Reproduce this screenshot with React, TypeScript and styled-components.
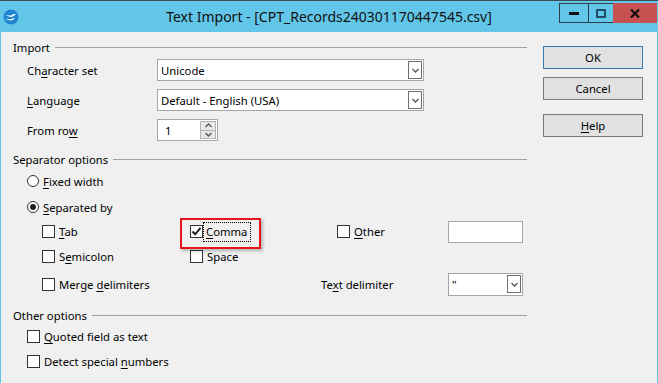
import React from "react";
import styled, { createGlobalStyle } from "styled-components";

const GlobalStyle = createGlobalStyle`
  html, body {
    margin: 0;
    padding: 0;
    background: #f0f0f0;
  }
  body {
    font-family: "Noto Sans", "Open Sans", sans-serif;
    font-size: 11.3px;
    color: #000;
  }
`;

const Window = styled.div`
  width: 658px;
  height: 383px;
  overflow: hidden;
  display: flex;
  flex-direction: column;
  background: #62c6e9;
  border-top: 1px solid #3d4a52;
  box-sizing: border-box;
`;

const TitleBar = styled.div`
  height: 31px;
  flex: none;
  display: grid;
  grid-template-columns: 1fr auto 1fr;
  align-items: start;
`;

const TitleIcon = styled.div`
  padding: 8px 0 0 3px;
  height: 16px;
`;

const TitleText = styled.div`
  font-size: 14px;
  line-height: 31px;
  color: #111;
  white-space: nowrap;
`;

const Controls = styled.div`
  justify-self: end;
  display: flex;
  margin: 2px 1px 0 0;
`;

const CtrlButton = styled.div<{ $w: number; $close?: boolean }>`
  width: ${(p) => p.$w}px;
  height: 20px;
  box-sizing: border-box;
  display: flex;
  align-items: center;
  justify-content: center;
  background: ${(p) => (p.$close ? "#c75050" : "transparent")};
  border: ${(p) => (p.$close ? "none" : "1px solid #2a3e48")};
  border-right: none;
`;

const Body = styled.div`
  flex: 1;
  display: flex;
  gap: 16px;
  margin: 0 1px;
  padding: 7px 14px 0 12px;
  background: #f0f0f0;
`;

const Main = styled.div`
  width: 514px;
  display: flex;
  flex-direction: column;
`;

const SectionHeader = styled.div<{ $mt?: number }>`
  height: 16px;
  margin-top: ${(p) => p.$mt ?? 0}px;
  display: flex;
  align-items: center;
  gap: 5px;
  &::after {
    content: "";
    flex: 1;
    height: 1px;
    background: #a0a0a0;
  }
`;

const FieldRow = styled.div<{ $mt: number }>`
  display: flex;
  align-items: center;
  margin-top: ${(p) => p.$mt}px;
  padding-left: 14px;
`;

const FieldLabel = styled.div`
  width: 130px;
`;

const Key = styled.span`
  text-decoration: underline;
  text-underline-offset: 2px;
`;

const Combo = styled.div<{ $w: number; $h?: number }>`
  width: ${(p) => p.$w}px;
  height: ${(p) => p.$h ?? 22}px;
  box-sizing: border-box;
  border: 1px solid #a6a6a6;
  background: #fff;
  display: flex;
  align-items: center;
  justify-content: space-between;
  padding: 0 1px 0 3px;
`;

const DropButton = styled.div`
  width: 14px;
  height: 18px;
  box-sizing: border-box;
  border: 1px solid #707070;
  display: flex;
  align-items: center;
  justify-content: center;
`;

const Spinner = styled.div`
  width: 61px;
  height: 22px;
  box-sizing: border-box;
  border: 1px solid #a6a6a6;
  background: #fff;
  display: flex;
  align-items: center;
  justify-content: space-between;
  padding: 0 1px 0 7px;
`;

const SpinButtons = styled.div`
  width: 16px;
  height: 18px;
  display: flex;
  flex-direction: column;
  border: 1px solid #b4b4b4;
  box-sizing: border-box;
`;

const SpinHalf = styled.div`
  flex: 1;
  background: #e8e8e8;
  display: flex;
  align-items: center;
  justify-content: center;
  & + & {
    border-top: 1px solid #b4b4b4;
  }
`;

const OptionRow = styled.label<{ $mt: number }>`
  height: 20px;
  margin-top: ${(p) => p.$mt}px;
  padding-left: 14px;
  display: flex;
  align-items: center;
  gap: 4px;
`;

const Radio = styled.span<{ $on?: boolean }>`
  width: 12px;
  height: 12px;
  box-sizing: border-box;
  border: 1px solid #333;
  border-radius: 50%;
  background: #fff;
  display: flex;
  align-items: center;
  justify-content: center;
  &::after {
    content: "";
    width: 6px;
    height: 6px;
    border-radius: 50%;
    background: ${(p) => (p.$on ? "#222" : "transparent")};
  }
`;

const Box = styled.span`
  width: 13px;
  height: 13px;
  flex: none;
  box-sizing: border-box;
  border: 1px solid #333;
  background: #fff;
  display: flex;
  align-items: center;
  justify-content: center;
`;

const SepGrid = styled.div`
  margin-top: 2px;
  padding-left: 29px;
  display: grid;
  grid-template-columns: 148px 131px 127px 75px;
  grid-template-rows: 25px 25px 30px;
  align-items: center;
`;

const Cell = styled.div<{ $pl?: number }>`
  display: flex;
  align-items: center;
  gap: 4px;
  padding-left: ${(p) => p.$pl ?? 0}px;
`;

const Highlight = styled(Cell)`
  position: relative;
  &::after {
    content: "";
    position: absolute;
    left: -10px;
    top: -5px;
    width: 81px;
    height: 31px;
    box-sizing: border-box;
    border: 2px solid #e8141c;
    box-shadow: 2px 2px 3px rgba(0, 0, 0, 0.25);
  }
`;

const Focused = styled.span`
  margin-left: -3px;
  padding: 1px 3px 2px 2px;
  outline: 1px dotted #000;
`;

const TextField = styled.div`
  width: 75px;
  height: 22px;
  box-sizing: border-box;
  border: 1px solid #a6a6a6;
  background: #fff;
`;

const Buttons = styled.div`
  width: 100px;
  padding-top: 7px;
  display: flex;
  flex-direction: column;
`;

const PushButton = styled.div<{ $default?: boolean; $mt?: number }>`
  height: 23px;
  margin-top: ${(p) => p.$mt ?? 0}px;
  box-sizing: border-box;
  border: 1px solid ${(p) => (p.$default ? "#3a78b0" : "#7a7a7a")};
  background: #e1e1e1;
  display: flex;
  align-items: center;
  justify-content: center;
`;

const Chevron = ({ up }: { up?: boolean }) => (
  <svg width="7" height="5" viewBox="0 0 7 5">
    <path
      d={up ? "M0.5 4 L3.5 1 L6.5 4" : "M0.5 1 L3.5 4 L6.5 1"}
      fill="none"
      stroke="#555"
      strokeWidth="1.3"
    />
  </svg>
);

const Drop = () => (
  <DropButton>
    <Chevron />
  </DropButton>
);

const AppIcon = () => (
  <svg width="16" height="16" viewBox="0 0 16 16">
    <circle cx="8" cy="8" r="7.5" fill="#1d86d0" />
    <path d="M3 6.8 C5 5.2 7 7.6 9 6 C10.5 4.8 12 5 13.2 5.6 C11.5 5.6 10.6 7.8 8.4 8 C6.4 8.2 5 6.4 3 6.8 Z" fill="#fff" />
    <path d="M2.8 10.2 C4.6 9 6.4 10.8 8.4 9.8 C9.8 9.1 11 9 12 9.4 C10.4 9.8 9.6 11.4 7.6 11.4 C5.8 11.4 4.6 10 2.8 10.2 Z" fill="#fff" />
  </svg>
);

const Check = () => (
  <svg width="11" height="11" viewBox="0 0 11 11">
    <path d="M1.5 5.5 L4.2 8.3 L9.5 1.8" fill="none" stroke="#222" strokeWidth="2" />
  </svg>
);

function App() {
  return (
    <Window>
      <GlobalStyle />
      <TitleBar>
        <TitleIcon>
          <AppIcon />
        </TitleIcon>
        <TitleText>Text Import - [CPT_Records240301170447545.csv]</TitleText>
        <Controls>
          <CtrlButton $w={29}>
            <svg width="10" height="3">
              <rect width="10" height="3" fill="#111" />
            </svg>
          </CtrlButton>
          <CtrlButton $w={25}>
            <svg width="10" height="9">
              <rect x="1" y="1" width="8" height="7" fill="none" stroke="#1f4c66" strokeWidth="2" />
            </svg>
          </CtrlButton>
          <CtrlButton $w={44} $close>
            <svg width="10" height="9" viewBox="0 0 10 9">
              <path d="M1 0.5 L9 8.5 M9 0.5 L1 8.5" stroke="#111" strokeWidth="2.2" />
            </svg>
          </CtrlButton>
        </Controls>
      </TitleBar>
      <Body>
        <Main>
          <SectionHeader>Import</SectionHeader>
          <FieldRow $mt={4}>
            <FieldLabel>
              Ch<Key>a</Key>racter set
            </FieldLabel>
            <Combo $w={267}>
              Unicode
              <Drop />
            </Combo>
          </FieldRow>
          <FieldRow $mt={8}>
            <FieldLabel>
              <Key>L</Key>anguage
            </FieldLabel>
            <Combo $w={267}>
              Default - English (USA)
              <Drop />
            </Combo>
          </FieldRow>
          <FieldRow $mt={8}>
            <FieldLabel>
              From ro<Key>w</Key>
            </FieldLabel>
            <Spinner>
              1
              <SpinButtons>
                <SpinHalf>
                  <Chevron up />
                </SpinHalf>
                <SpinHalf>
                  <Chevron />
                </SpinHalf>
              </SpinButtons>
            </Spinner>
          </FieldRow>

          <SectionHeader $mt={10}>Separator options</SectionHeader>
          <OptionRow $mt={4}>
            <Radio />
            <span>
              <Key>F</Key>ixed width
            </span>
          </OptionRow>
          <OptionRow $mt={6}>
            <Radio $on />
            <span>
              <Key>S</Key>eparated by
            </span>
          </OptionRow>
          <SepGrid>
            <Cell>
              <Box />
              <span>
                <Key>T</Key>ab
              </span>
            </Cell>
            <Highlight>
              <Box>
                <Check />
              </Box>
              <Focused>
                <Key>C</Key>omma
              </Focused>
            </Highlight>
            <Cell $pl={16}>
              <Box />
              <span>
                <Key>O</Key>ther
              </span>
            </Cell>
            <TextField />

            <Cell>
              <Box />
              <span>
                S<Key>e</Key>micolon
              </span>
            </Cell>
            <Cell>
              <Box />
              <span>Space</span>
            </Cell>
            <Cell />
            <Cell />

            <Cell>
              <Box />
              <span>
                Merge <Key>d</Key>elimiters
              </span>
            </Cell>
            <Cell />
            <Cell>
              <span>
                Te<Key>x</Key>t delimiter
              </span>
            </Cell>
            <Combo $w={75} $h={23}>
              "
              <Drop />
            </Combo>
          </SepGrid>

          <SectionHeader $mt={8}>Other options</SectionHeader>
          <OptionRow $mt={3}>
            <Box />
            <span>
              <Key>Q</Key>uoted field as text
            </span>
          </OptionRow>
          <OptionRow $mt={5}>
            <Box />
            <span>
              Detect special <Key>n</Key>umbers
            </span>
          </OptionRow>
        </Main>
        <Buttons>
          <PushButton $default>OK</PushButton>
          <PushButton $mt={8}>Cancel</PushButton>
          <PushButton $mt={14}>
            <Key>H</Key>elp
          </PushButton>
        </Buttons>
      </Body>
    </Window>
  );
}

export default App;
